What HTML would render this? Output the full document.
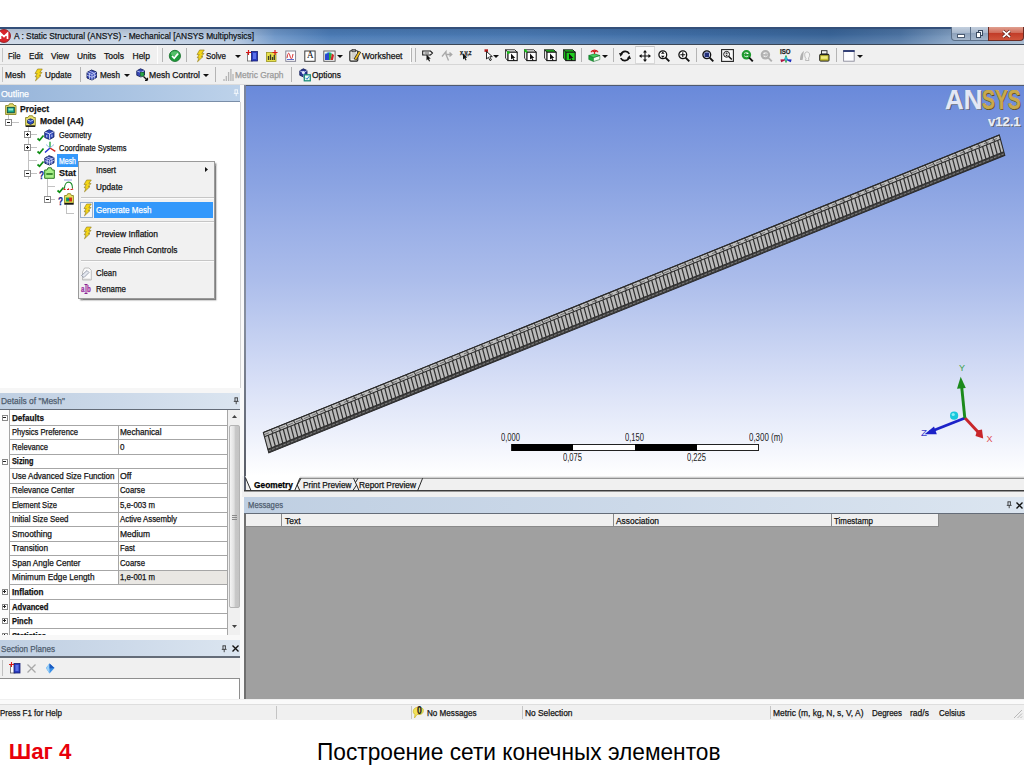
<!DOCTYPE html>
<html lang="ru">
<head>
<meta charset="utf-8">
<title>Шаг 4 - Построение сети конечных элементов</title>
<style>
html,body{margin:0;padding:0;}
body{width:1024px;height:767px;position:relative;overflow:hidden;background:#fff;
 font-family:"Liberation Sans",sans-serif;font-size:9px;color:#111;}
.a{position:absolute;}
.t{position:absolute;white-space:nowrap;transform-origin:0 50%;-webkit-text-stroke:0.25px currentColor;}
svg{position:absolute;overflow:visible;}
</style>
</head>
<body>
<div class="a" style="left:0px;top:27px;width:1024px;height:17px;background:linear-gradient(90deg,#c9d5e4 0px,#c3d1e3 150px,#b1c5de 235px,#6f97c8 275px,#4c7cb6 330px,#4a79b2 520px,#3f6da4 700px,#3a6598 830px,#4d74a3 900px,#7e9cbf 950px,#9fb4cc 1024px);"></div>
<div class="a" style="left:0px;top:27px;width:1024px;height:17px;background:linear-gradient(180deg,rgba(10,30,60,0.16) 0%,rgba(10,30,60,0.04) 45%,rgba(255,255,255,0.02) 55%,rgba(255,255,255,0.14) 100%);"></div>
<div class="a" style="left:0px;top:27px;width:1024px;height:1.5px;background:#34507a;"></div>
<div class="a" style="left:0px;top:44px;width:1024px;height:1px;background:#3a4656;"></div>
<svg style="left:0;top:28px" width="12" height="16" viewBox="0 0 12 16"><circle cx="4" cy="8" r="6.5" fill="#d8242a"/><circle cx="4" cy="8" r="6.5" fill="none" stroke="#8a1418" stroke-width="0.8"/><path d="M0.5 11V5.2L4 8.6L7.5 5.2V11" fill="none" stroke="#fff" stroke-width="1.7"/></svg>
<span class="t" style="left:13.5px;top:29.5px;font-size:9px;line-height:13px;color:#101418;transform:scaleX(0.928);">A : Static Structural (ANSYS) - Mechanical [ANSYS Multiphysics]</span>
<div class="a" style="left:950.500px;top:27px;width:20.500px;height:14px;border:1px solid #5b6f88;border-top:none;border-radius:0 0 0 4px;background:linear-gradient(180deg,#c3cfde 0%,#a9b9cd 45%,#8fa3bc 50%,#a4b6cb 100%);box-sizing:border-box"></div>
<div class="a" style="left:970px;top:27px;width:19px;height:14px;border:1px solid #5b6f88;border-top:none;background:linear-gradient(180deg,#c3cfde 0%,#a9b9cd 45%,#8fa3bc 50%,#a4b6cb 100%);box-sizing:border-box"></div>
<div class="a" style="left:988px;top:27px;width:36px;height:14px;border:1px solid #6b2a22;border-top:none;border-radius:0 0 4px 0;background:linear-gradient(180deg,#e0a090 0%,#d06a58 45%,#c23c28 50%,#d0553c 100%);box-sizing:border-box"></div>
<div class="a" style="left:957px;top:34px;width:8px;height:3.500px;background:#fff;border:1px solid #4a5a70;box-sizing:border-box"></div>
<div class="a" style="left:978px;top:30px;width:5px;height:6px;border:1px solid #3a4a60;background:#e8eef5;box-sizing:border-box"></div>
<div class="a" style="left:976px;top:32px;width:5px;height:6px;border:1px solid #3a4a60;background:#fff;box-sizing:border-box"></div>
<svg style="left:1002px;top:30px" width="9" height="8" viewBox="0 0 9 8"><path d="M1 0.800L8 7.200M8 0.800L1 7.200" stroke="#5a1a14" stroke-width="3"/><path d="M1 0.800L8 7.200M8 0.800L1 7.200" stroke="#fff" stroke-width="1.800"/></svg>
<div class="a" style="left:0px;top:45px;width:1024px;height:40px;background:#f0f0f0;"></div>
<div class="a" style="left:0px;top:64px;width:1024px;height:1px;background:#d6d6d6;"></div>
<div class="a" style="left:0px;top:84px;width:1024px;height:1px;background:#dcdcdc;"></div>
<span class="t" style="left:8px;top:49.5px;font-size:8.5px;line-height:12px;color:#141414;transform:scaleX(0.912);">File</span>
<span class="t" style="left:29px;top:49.5px;font-size:8.5px;line-height:12px;color:#141414;transform:scaleX(0.955);">Edit</span>
<span class="t" style="left:51px;top:49.5px;font-size:8.5px;line-height:12px;color:#141414;transform:scaleX(0.985);">View</span>
<span class="t" style="left:77px;top:49.5px;font-size:8.5px;line-height:12px;color:#141414;transform:scaleX(0.981);">Units</span>
<span class="t" style="left:104px;top:49.5px;font-size:8.5px;line-height:12px;color:#141414;transform:scaleX(1.008);">Tools</span>
<span class="t" style="left:132.5px;top:49.5px;font-size:8.5px;line-height:12px;color:#141414;">Help</span>
<span class="t" style="left:206px;top:49.5px;font-size:8.5px;line-height:12px;color:#141414;transform:scaleX(0.940);">Solve</span>
<span class="t" style="left:362px;top:49.5px;font-size:8.5px;line-height:12px;color:#141414;">Worksheet</span>
<span class="t" style="left:4.5px;top:68.5px;font-size:8.5px;line-height:12px;color:#141414;transform:scaleX(0.986);">Mesh</span>
<span class="t" style="left:44.5px;top:68.5px;font-size:8.5px;line-height:12px;color:#141414;transform:scaleX(0.966);">Update</span>
<span class="t" style="left:99.5px;top:68.5px;font-size:8.5px;line-height:12px;color:#141414;transform:scaleX(0.962);">Mesh</span>
<span class="t" style="left:149px;top:68.5px;font-size:8.5px;line-height:12px;color:#141414;transform:scaleX(1.009);">Mesh Control</span>
<span class="t" style="left:234.5px;top:68.5px;font-size:8.5px;line-height:12px;color:#9a9a9a;transform:scaleX(0.987);">Metric Graph</span>
<span class="t" style="left:312px;top:68.5px;font-size:8.5px;line-height:12px;color:#141414;transform:scaleX(0.990);">Options</span>
<div class="a" style="left:157px;top:48px;width:1px;height:14px;background:#b4b4b4;"></div>
<div class="a" style="left:161.5px;top:48px;width:1px;height:14px;background:#b4b4b4;"></div>
<div class="a" style="left:186px;top:48px;width:1px;height:14px;background:#b4b4b4;"></div>
<div class="a" style="left:410.5px;top:48px;width:1px;height:14px;background:#b4b4b4;"></div>
<div class="a" style="left:414.5px;top:48px;width:1px;height:14px;background:#b4b4b4;"></div>
<div class="a" style="left:581px;top:48px;width:1px;height:14px;background:#b4b4b4;"></div>
<div class="a" style="left:613px;top:48px;width:1px;height:14px;background:#b4b4b4;"></div>
<div class="a" style="left:696px;top:48px;width:1px;height:14px;background:#b4b4b4;"></div>
<div class="a" style="left:836px;top:48px;width:1px;height:14px;background:#b4b4b4;"></div>
<div class="a" style="left:1.5px;top:48px;width:1px;height:14px;background:#c4c4c4;"></div>
<div class="a" style="left:79.5px;top:67px;width:1px;height:15px;background:#b4b4b4;"></div>
<div class="a" style="left:214.5px;top:67px;width:1px;height:15px;background:#b4b4b4;"></div>
<div class="a" style="left:291px;top:67px;width:1px;height:15px;background:#b4b4b4;"></div>
<div class="a" style="left:1.5px;top:67px;width:1px;height:15px;background:#c4c4c4;"></div>
<svg style="left:234.5px;top:54.5px" width="6" height="3" viewBox="0 0 6 3"><path d="M0 0H6L3 3Z" fill="#111"/></svg>
<svg style="left:337px;top:54.5px" width="6" height="3" viewBox="0 0 6 3"><path d="M0 0H6L3 3Z" fill="#111"/></svg>
<svg style="left:493px;top:54.5px" width="6" height="3" viewBox="0 0 6 3"><path d="M0 0H6L3 3Z" fill="#111"/></svg>
<svg style="left:602px;top:54.5px" width="6" height="3" viewBox="0 0 6 3"><path d="M0 0H6L3 3Z" fill="#111"/></svg>
<svg style="left:856.6px;top:54.5px" width="6" height="3" viewBox="0 0 6 3"><path d="M0 0H6L3 3Z" fill="#111"/></svg>
<svg style="left:124px;top:73.5px" width="6" height="3" viewBox="0 0 6 3"><path d="M0 0H6L3 3Z" fill="#111"/></svg>
<svg style="left:203px;top:73.5px" width="6" height="3" viewBox="0 0 6 3"><path d="M0 0H6L3 3Z" fill="#111"/></svg>
<div class="a" style="left:157px;top:46px;width:1px;height:18px;background:#fdfdfd;"></div>
<div class="a" style="left:410px;top:46px;width:1px;height:18px;background:#fdfdfd;"></div>
<svg style="left:168.5px;top:50px" width="12" height="12" viewBox="0 0 12 12"><circle cx="5.900" cy="5.900" r="5.600" fill="#1e9a3a"/><circle cx="5.900" cy="5.900" r="5.600" fill="none" stroke="#0d6a22" stroke-width="0.8"/><ellipse cx="5.900" cy="3.600" rx="4" ry="2.300" fill="#6ccf7e" opacity="0.7"/><path d="M3 6L5.200 8.200L9 3.600" stroke="#fff" stroke-width="1.700" fill="none"/></svg>
<svg style="left:195.5px;top:49.5px" width="9" height="12" viewBox="0 0 9 12"><path d="M3.600 0L8.300 0L5.800 3.400L8 3.400L5.300 6.600L7 6.600L1.500 11.800L3 7.800L1.200 7.800L3.200 4.600L1 4.600Z" fill="#f4d618" stroke="#8a7410" stroke-width="0.600"/></svg>
<svg style="left:246px;top:49.5px" width="12" height="12" viewBox="0 0 12 12"><rect x="1.500" y="2.500" width="5" height="8.500" fill="#fff" stroke="#666" stroke-width="0.8"/><rect x="5.500" y="1.500" width="6" height="9.500" fill="#2a3cc0" stroke="#141c70" stroke-width="0.8"/><rect x="7" y="3" width="3" height="6" fill="#5a70e8"/><path d="M2.500 0V5M0 2.500H5" stroke="#d81818" stroke-width="1.200"/></svg>
<svg style="left:266px;top:49.5px" width="12" height="12" viewBox="0 0 12 12"><rect x="0.500" y="2.500" width="9.500" height="9" fill="#e8e04a" stroke="#9a9420" stroke-width="0.8"/><path d="M2.500 10V6M4.500 10V4.500M6.500 10V7M8.300 10V5" stroke="#3a3a2a" stroke-width="1.300"/><path d="M9 0V5M6.500 2.500H11.500" stroke="#d81818" stroke-width="1.200"/></svg>
<svg style="left:285px;top:49.5px" width="12" height="12" viewBox="0 0 12 12"><rect x="0.800" y="1" width="9.800" height="10.300" fill="#fdfdff" stroke="#7a7a8a" stroke-width="0.9"/><path d="M2 8C3 2 4 2 5 6S7 10 8 4" stroke="#d83030" stroke-width="1" fill="none"/><path d="M2 9.500H9" stroke="#4a5ac8" stroke-width="0.9"/></svg>
<svg style="left:304px;top:49.5px" width="12" height="12" viewBox="0 0 12 12"><rect x="0.800" y="1" width="10.300" height="10.300" fill="#fff" stroke="#3a3a3a" stroke-width="1"/></svg>
<span class="t" style="left:306.5px;top:49.3px;font-size:9.5px;line-height:13px;color:#111;transform:scaleX(0.945);font-family:'Liberation Serif',serif;-webkit-text-stroke:0;">A</span>
<svg style="left:323px;top:49.5px" width="13" height="12" viewBox="0 0 13 12"><rect x="0.800" y="1" width="11.300" height="10.300" fill="#f4f4f4" stroke="#555" stroke-width="0.9"/><path d="M2 4L6 2L6 10L2 10Z" fill="#2a48d0"/><path d="M6 2L9 3.500L7.500 10L6 10Z" fill="#28b040"/><path d="M9 3.500L11 5L10 10L7.500 10Z" fill="#d02828"/><path d="M2 4L6 2L9 3.500" stroke="#6ad0e8" stroke-width="0.8" fill="none"/></svg>
<svg style="left:349px;top:49px" width="12" height="13" viewBox="0 0 12 13"><rect x="0.800" y="1.800" width="8" height="10.300" rx="1" fill="#f2f2ea" stroke="#222" stroke-width="1.100"/><rect x="3" y="0.500" width="3.600" height="2.400" fill="#888" stroke="#222" stroke-width="0.600"/><path d="M2.500 5H7M2.500 7H7M2.500 9H6" stroke="#999" stroke-width="0.700"/><path d="M10.800 2.500L6 10.800" stroke="#222" stroke-width="3"/><path d="M10.600 2.800L6.300 10.300" stroke="#f0c020" stroke-width="1.700"/></svg>
<svg style="left:422px;top:49.5px" width="12" height="12" viewBox="0 0 12 12"><path d="M0.700 1H8.500L10.500 3L8.500 5H0.700Z" fill="#f4f4f4" stroke="#1a1a1a" stroke-width="1.100"/><path d="M2.500 3H7" stroke="#444" stroke-width="0.900"/><path d="M4.5 4.5l0 6l1.400 -1.300l1.200 2.400l1 -0.500l-1.200 -2.300l1.900 0Z" fill="#111"/></svg>
<svg style="left:441px;top:49.5px" width="12" height="12" viewBox="0 0 12 12"><path d="M1 6.500L5 1.500V4.500H10.500M8.500 2.500L10.800 4.600L8.500 6.500M5 4.500L7.500 10.500" stroke="#a8a8a8" stroke-width="1.300" fill="none"/></svg>
<span class="t" style="left:459.5px;top:47.5px;font-size:6.5px;line-height:9px;color:#222;font-weight:bold;transform:scaleX(0.845);">x,y,z</span>
<svg style="left:462px;top:53px" width="8" height="9" viewBox="0 0 8 9"><path d="M1 0.5l0 6l1.400 -1.300l1.200 2.400l1 -0.500l-1.200 -2.300l1.900 0Z" fill="#111"/></svg>
<svg style="left:483.5px;top:49px" width="11" height="13" viewBox="0 0 11 13"><rect x="0.500" y="0.300" width="3.500" height="2.600" fill="#b01818"/><path d="M2.500 2.500V10L4.400 8.300L6 11.600L7.400 10.900L5.800 7.700L8.300 7.600Z" fill="#fff" stroke="#111" stroke-width="0.900"/></svg>
<svg style="left:504.8px;top:49.3px" width="13" height="12.5" viewBox="0 0 13 12.5"><path d="M0.600 0.800L3 3.200V11.600L0.600 9.300Z" fill="#fff" stroke="#1a1a1a" stroke-width="0.900"/><path d="M0.600 0.800H9.800L12.200 3.200H3Z" fill="#fff" stroke="#1a1a1a" stroke-width="0.900"/><rect x="3" y="3.200" width="9.200" height="8.400" fill="#fff" stroke="#1a1a1a" stroke-width="1.100"/><rect x="2" y="2.200" width="2.600" height="2.600" fill="#18c018"/><path d="M6 4.6l0 6l1.400 -1.300l1.200 2.400l1 -0.500l-1.200 -2.300l1.900 0Z" fill="#111"/></svg>
<svg style="left:524px;top:49.3px" width="13" height="12.5" viewBox="0 0 13 12.5"><path d="M0.600 0.800L3 3.200V11.600L0.600 9.300Z" fill="#fff" stroke="#1a1a1a" stroke-width="0.900"/><path d="M0.600 0.800H9.800L12.200 3.200H3Z" fill="#fff" stroke="#1a1a1a" stroke-width="0.900"/><rect x="3" y="3.200" width="9.200" height="8.400" fill="#fff" stroke="#1a1a1a" stroke-width="1.100"/><path d="M0.600 0.800L3 3.200" stroke="#18c018" stroke-width="2"/><path d="M6 4.6l0 6l1.400 -1.300l1.200 2.400l1 -0.500l-1.200 -2.300l1.900 0Z" fill="#111"/></svg>
<svg style="left:543.5px;top:49.3px" width="13" height="12.5" viewBox="0 0 13 12.5"><path d="M0.600 0.800L3 3.200V11.600L0.600 9.300Z" fill="#fff" stroke="#1a1a1a" stroke-width="0.900"/><path d="M0.600 0.800H9.800L12.200 3.200H3Z" fill="#1fd01f" stroke="#1a1a1a" stroke-width="0.900"/><rect x="3" y="3.200" width="9.200" height="8.400" fill="#fff" stroke="#1a1a1a" stroke-width="1.100"/><path d="M6 4.6l0 6l1.400 -1.300l1.200 2.400l1 -0.500l-1.200 -2.300l1.900 0Z" fill="#111"/></svg>
<svg style="left:562.5px;top:49.3px" width="13" height="12.5" viewBox="0 0 13 12.5"><path d="M0.600 0.800L3 3.200V11.600L0.600 9.300Z" fill="#1fd01f" stroke="#1a1a1a" stroke-width="0.900"/><path d="M0.600 0.800H9.800L12.200 3.200H3Z" fill="#1fd01f" stroke="#1a1a1a" stroke-width="0.900"/><rect x="3" y="3.200" width="9.200" height="8.400" fill="#1fd01f" stroke="#1a1a1a" stroke-width="1.100"/><path d="M6 4.6l0 6l1.400 -1.300l1.200 2.400l1 -0.500l-1.200 -2.300l1.900 0Z" fill="#111"/></svg>
<svg style="left:587.5px;top:49px" width="13" height="13" viewBox="0 0 13 13"><path d="M0.800 6.500L5.500 8.500V12.500L0.800 10.500Z" fill="#18a838" stroke="#0c6a20" stroke-width="0.600"/><path d="M5.500 8.500L11.800 6.500V10.500L5.500 12.500Z" fill="#f4fff4" stroke="#3a8a4a" stroke-width="0.700"/><path d="M0.800 6.500L6.500 4.800L11.800 6.500L5.500 8.500Z" fill="#48d060" stroke="#0c6a20" stroke-width="0.600"/><path d="M3 3.200C4 0.300 9 0.300 10 3.200" stroke="#d02020" stroke-width="1.200" fill="none"/><path d="M4.500 2.500H8.500" stroke="#d02020" stroke-width="1.400"/><path d="M6.500 2.500V5" stroke="#d02020" stroke-width="1"/></svg>
<svg style="left:619px;top:49.5px" width="12" height="12" viewBox="0 0 12 12"><path d="M10.300 3.800A4.600 4.600 0 0 0 2 4.300" stroke="#111" stroke-width="1.700" fill="none"/><path d="M1.700 8.200A4.600 4.600 0 0 0 10 7.700" stroke="#111" stroke-width="1.700" fill="none"/><path d="M0 3L4.200 3.500L1.500 6.800Z" fill="#111"/><path d="M12 9L7.800 8.500L10.500 5.200Z" fill="#111"/></svg>
<div class="a" style="left:634.500px;top:46px;width:20px;height:18px;background:#f8f8f8;border:1px solid #d8d8d8;border-top-color:#c4c4c4;box-sizing:border-box"></div>
<svg style="left:639px;top:49.5px" width="12" height="12" viewBox="0 0 12 12"><path d="M6 1V11M1 6H11" stroke="#111" stroke-width="1.100"/><path d="M6 0L8 2.600H4ZM6 12L8 9.400H4ZM0 6L2.600 4V8ZM12 6L9.400 4V8Z" fill="#111"/></svg>
<svg style="left:658px;top:49.5px" width="12" height="12" viewBox="0 0 12 12"><circle cx="4.8" cy="4.800" r="3.900" fill="#fff" stroke="#111" stroke-width="1.300"/><path d="M7.600 7.600L11.300 11.300" stroke="#111" stroke-width="1.900"/><path d="M4.800 1.600L6.600 3.800H3ZM4.800 8L6.600 5.800H3Z" fill="#111"/></svg>
<svg style="left:677.5px;top:49.5px" width="12" height="12" viewBox="0 0 12 12"><circle cx="4.8" cy="4.800" r="3.900" fill="#fff" stroke="#111" stroke-width="1.300"/><path d="M7.600 7.600L11.300 11.300" stroke="#111" stroke-width="1.900"/><path d="M4.800 2.300V7.300M2.300 4.800H7.300" stroke="#111" stroke-width="1.100"/></svg>
<svg style="left:702px;top:49.5px" width="12" height="12" viewBox="0 0 12 12"><circle cx="4.8" cy="4.800" r="3.900" fill="#c8d0f0" stroke="#111" stroke-width="1.300"/><path d="M7.600 7.600L11.300 11.300" stroke="#111" stroke-width="1.900"/><rect x="2.600" y="2.600" width="4.400" height="4.400" fill="#22307a"/></svg>
<svg style="left:721px;top:49.3px" width="13" height="13" viewBox="0 0 13 13"><rect x="0.600" y="0.600" width="11.800" height="11.800" fill="#fafafa" stroke="#222" stroke-width="1.100"/><circle cx="5.600" cy="5.300" r="2.900" fill="#fff" stroke="#111" stroke-width="1"/><path d="M7.800 7.500L10.800 10.600" stroke="#111" stroke-width="1.500"/><path d="M5.600 3.200L6.900 4.800H4.300ZM5.600 7.400L6.900 5.800H4.300Z" fill="#111"/></svg>
<svg style="left:740.5px;top:49.5px" width="13" height="12" viewBox="0 0 13 12"><circle cx="5.400" cy="4.800" r="3.600" fill="#fff" stroke="#1e9a2e" stroke-width="2.300"/><path d="M8.200 7.600L11.800 11.300" stroke="#111" stroke-width="1.900"/><path d="M2.600 4.800L5.400 2.600V3.900H8V5.700H5.400V7Z" fill="#1e9a2e"/></svg>
<svg style="left:760px;top:49.5px" width="13" height="12" viewBox="0 0 13 12"><circle cx="5.400" cy="4.800" r="3.600" fill="#f4f4f4" stroke="#b0b0b0" stroke-width="2.300"/><path d="M8.200 7.600L11.800 11.300" stroke="#b0b0b0" stroke-width="1.900"/><path d="M8.200 4.800L5.400 2.600V3.900H3V5.700H5.400V7Z" fill="#b8b8b8"/></svg>
<span class="t" style="left:780px;top:47.0px;font-size:6.5px;line-height:9px;color:#222;font-weight:bold;transform:scaleX(0.937);">ISO</span>
<svg style="left:779.5px;top:54.5px" width="12" height="8" viewBox="0 0 12 8"><path d="M6 0.500V7.500" stroke="#18a040" stroke-width="1.500"/><path d="M6 4L1 6.500" stroke="#b01840" stroke-width="1.500"/><path d="M6 4L11 6.500" stroke="#2030c0" stroke-width="1.500"/><circle cx="6" cy="3.800" r="1.700" fill="#30b8d0"/><path d="M0.300 4.500L3 4.200L1.500 7.300Z" fill="#b01840"/><path d="M11.700 4.500L9 4.200L10.500 7.300Z" fill="#2030c0"/></svg>
<svg style="left:799px;top:49.5px" width="12" height="12" viewBox="0 0 12 12"><path d="M1 10C1 5 3 2 5 1C4 4 4.500 7 3.500 10Z" fill="#b0b0b0"/><path d="M6 3C7 1.500 10 1.500 10.500 4C11 6 10 7 9.500 8L10 10.500H6.500L7 8.500C5.500 7 5.500 4.500 6 3Z" fill="#f4f4f4" stroke="#b4b4b4" stroke-width="0.900"/></svg>
<svg style="left:818.5px;top:49.5px" width="11" height="12" viewBox="0 0 11 12"><rect x="2.500" y="0.700" width="5.500" height="3.300" fill="#f4f4f4" stroke="#222" stroke-width="0.900"/><rect x="0.700" y="4.300" width="9.300" height="6.800" rx="0.800" fill="#c8c030" stroke="#222" stroke-width="1"/><rect x="2" y="6.200" width="6.600" height="2.600" fill="#f0ec80"/><path d="M1 4.600H9.800" stroke="#222" stroke-width="1.200"/></svg>
<svg style="left:842.5px;top:49.5px" width="12" height="12" viewBox="0 0 12 12"><rect x="0.600" y="0.600" width="10.600" height="10.600" fill="#fdfdff" stroke="#8a8a9a" stroke-width="0.900"/><rect x="0.200" y="0.200" width="11.400" height="1.700" fill="#1c2c6a"/></svg>
<svg style="left:33.5px;top:68.5px" width="9" height="12" viewBox="0 0 9 12"><path d="M3.600 0L8.300 0L5.800 3.400L8 3.400L5.300 6.600L7 6.600L1.500 11.800L3 7.800L1.200 7.800L3.200 4.600L1 4.600Z" fill="#f4d618" stroke="#8a7410" stroke-width="0.600"/></svg>
<svg style="left:86px;top:68.5px" width="12" height="12" viewBox="0 0 12 12"><path d="M1 3.500L5.500 1L10.500 3V8.500L6 11L1 9Z" fill="#3a4ab8" stroke="#14205a" stroke-width="0.900"/><path d="M1 3.500L6 5.500L10.500 3M6 5.500V11M3.400 2.200L8.300 4.300V9.800M3.500 4.500V10M1 6.200L6 8.300L10.500 5.800" stroke="#dfe6ff" stroke-width="0.700" fill="none"/></svg>
<svg style="left:136px;top:68px" width="12" height="13" viewBox="0 0 12 13"><path d="M0.800 2.800L4.500 0.800L8.500 2.500V7L5 9L0.800 7.300Z" fill="#3a4ab8" stroke="#14205a" stroke-width="0.900"/><path d="M0.800 2.800L5 4.500L8.500 2.500M5 4.500V9" stroke="#dfe6ff" stroke-width="0.700" fill="none"/><rect x="4.500" y="4.500" width="3.500" height="3.600" fill="#28a848" stroke="#0c5a20" stroke-width="0.600"/><path d="M7.500 8.500L11.500 12.300M11.500 12.300V9.800M11.500 12.300H9" stroke="#111" stroke-width="1.200" fill="none"/></svg>
<svg style="left:222.5px;top:68px" width="11" height="14" viewBox="0 0 11 14"><path d="M1 13V11M3.300 13V8M5.600 13V4M7.900 13V1M10 13V6" stroke="#b4b4b4" stroke-width="1.300"/></svg>
<svg style="left:299px;top:68px" width="12" height="14" viewBox="0 0 12 14"><path d="M0.800 2.800L4.300 0.800L8 2.500V7L4.800 9L0.800 7.300Z" fill="#2a3898" stroke="#14205a" stroke-width="0.900"/><path d="M0.800 2.800L4.800 4.500L8 2.500M4.800 4.500V9" stroke="#dfe6ff" stroke-width="0.700" fill="none"/><circle cx="4.300" cy="4.600" r="1.500" fill="#e8ecff"/><rect x="5.300" y="6.800" width="6" height="6" fill="#e8fff0" stroke="#1a8a7a" stroke-width="1.300"/><path d="M6.500 9.800L8 11.300L10.300 8.200" stroke="#2a7ad0" stroke-width="1" fill="none"/></svg>
<div class="a" style="left:0px;top:85px;width:240px;height:618px;background:#f0f0f0;"></div>
<div class="a" style="left:240px;top:85px;width:4px;height:618px;background:#fafafa;"></div>
<div class="a" style="left:0px;top:85px;width:240px;height:16px;background:linear-gradient(90deg,#97b5da 0%,#a9c3e2 50%,#bdd2ea 100%);"></div>
<div class="a" style="left:0px;top:101px;width:240px;height:1px;background:#7a8ea8;"></div>
<span class="t" style="left:1px;top:86.5px;font-size:9.5px;line-height:13px;color:#fff;transform:scaleX(0.930);">Outline</span>
<svg style="left:232.500px;top:89.300px" width="6.400" height="8" viewBox="0 0 8 10"><path d="M2 1H6M2.5 1V5M5.5 1V5M1 5.5H7M4 5.5V9" stroke="#fff" stroke-width="1" fill="none"/></svg>
<div class="a" style="left:0px;top:102px;width:240px;height:286px;background:#fff;"></div>
<div class="a" style="left:0px;top:388px;width:240px;height:5px;background:#f6f6f6;"></div>
<div class="a" style="left:240px;top:102px;width:1px;height:286px;background:#d4d4d4;"></div>
<div class="a" style="left:11px;top:121.5px;width:8px;height:1px;background:#c2c2c2;"></div>
<div class="a" style="left:8px;top:115px;width:1px;height:4px;background:#c2c2c2;"></div>
<div class="a" style="left:27.5px;top:127px;width:1px;height:52px;background:#c2c2c2;"></div>
<div class="a" style="left:31px;top:134px;width:6px;height:1px;background:#c2c2c2;"></div>
<div class="a" style="left:31px;top:147px;width:6px;height:1px;background:#c2c2c2;"></div>
<div class="a" style="left:28px;top:160px;width:9px;height:1px;background:#c2c2c2;"></div>
<div class="a" style="left:31px;top:173px;width:6px;height:1px;background:#c2c2c2;"></div>
<div class="a" style="left:47px;top:179px;width:1px;height:21px;background:#c2c2c2;"></div>
<div class="a" style="left:47px;top:186px;width:8px;height:1px;background:#c2c2c2;"></div>
<div class="a" style="left:51px;top:199px;width:4px;height:1px;background:#c2c2c2;"></div>
<div class="a" style="left:66px;top:205px;width:1px;height:9px;background:#c2c2c2;"></div>
<div class="a" style="left:66px;top:213px;width:8px;height:1px;background:#c2c2c2;"></div>
<div class="a" style="left:4.800000000000001px;top:118.5px;width:7px;height:7px;border:1px solid #8c8c8c;background:#fff;box-sizing:border-box"></div>
<div class="a" style="left:6.800000000000001px;top:121.5px;width:3px;height:1px;background:#111"></div>
<div class="a" style="left:24.0px;top:131.0px;width:7px;height:7px;border:1px solid #8c8c8c;background:#fff;box-sizing:border-box"></div>
<div class="a" style="left:26.0px;top:134.0px;width:3px;height:1px;background:#111"></div>
<div class="a" style="left:27.0px;top:133.0px;width:1px;height:3px;background:#111"></div>
<div class="a" style="left:24.0px;top:144.0px;width:7px;height:7px;border:1px solid #8c8c8c;background:#fff;box-sizing:border-box"></div>
<div class="a" style="left:26.0px;top:147.0px;width:3px;height:1px;background:#111"></div>
<div class="a" style="left:27.0px;top:146.0px;width:1px;height:3px;background:#111"></div>
<div class="a" style="left:24.0px;top:170.0px;width:7px;height:7px;border:1px solid #8c8c8c;background:#fff;box-sizing:border-box"></div>
<div class="a" style="left:26.0px;top:173.0px;width:3px;height:1px;background:#111"></div>
<div class="a" style="left:44.0px;top:196.0px;width:7px;height:7px;border:1px solid #8c8c8c;background:#fff;box-sizing:border-box"></div>
<div class="a" style="left:46.0px;top:199.0px;width:3px;height:1px;background:#111"></div>
<span class="t" style="left:20px;top:103.0px;font-size:9px;line-height:13px;color:#141414;font-weight:bold;transform:scaleX(0.950);">Project</span>
<span class="t" style="left:39.5px;top:115.0px;font-size:9px;line-height:13px;color:#141414;font-weight:bold;transform:scaleX(0.946);">Model (A4)</span>
<span class="t" style="left:58.5px;top:128.5px;font-size:8.5px;line-height:12px;color:#141414;transform:scaleX(0.871);">Geometry</span>
<span class="t" style="left:58.5px;top:141.5px;font-size:8.5px;line-height:12px;color:#141414;transform:scaleX(0.882);">Coordinate Systems</span>
<div class="a" style="left:57px;top:154px;width:21px;height:13px;background:#3398fb;"></div>
<span class="t" style="left:59px;top:154.5px;font-size:8.5px;line-height:12px;color:#fff;transform:scaleX(0.817);">Mesh</span>
<span class="t" style="left:59px;top:167.0px;font-size:9px;line-height:13px;color:#141414;font-weight:bold;">Stat</span>
<svg style="left:37px;top:134.8px" width="7" height="6" viewBox="0 0 7 6"><path d="M0.5 3.5L2.500 5.200L6.5 0.5" stroke="#0f8f14" stroke-width="1.700" fill="none"/></svg>
<svg style="left:37px;top:147.8px" width="7" height="6" viewBox="0 0 7 6"><path d="M0.5 3.5L2.500 5.200L6.5 0.5" stroke="#0f8f14" stroke-width="1.700" fill="none"/></svg>
<svg style="left:37px;top:160.5px" width="7" height="6" viewBox="0 0 7 6"><path d="M0.5 3.5L2.500 5.200L6.5 0.5" stroke="#0f8f14" stroke-width="1.700" fill="none"/></svg>
<svg style="left:56.5px;top:186.5px" width="7" height="6" viewBox="0 0 7 6"><path d="M0.5 3.5L2.500 5.200L6.5 0.5" stroke="#0f8f14" stroke-width="1.700" fill="none"/></svg>
<span class="t" style="left:38.5px;top:168.0px;font-size:10.5px;line-height:15px;color:#16268a;font-weight:bold;transform:scaleX(0.779);">?</span>
<span class="t" style="left:57.8px;top:194.3px;font-size:10.5px;line-height:15px;color:#16268a;font-weight:bold;transform:scaleX(0.779);">?</span>
<svg style="left:5px;top:102.5px" width="12" height="12.5" viewBox="0 0 12 12.5"><path d="M0.600 2.500H3.500L4.500 0.800H8L9 2.500H11V11.500H0.600Z" fill="#e8e070" stroke="#8a8420" stroke-width="0.900"/><rect x="2.300" y="4.300" width="7" height="5.500" fill="#1aa88a" stroke="#0c4a40" stroke-width="0.900"/><rect x="3.500" y="5.500" width="4.600" height="2" fill="#8ae8d0"/></svg>
<svg style="left:25px;top:115.3px" width="11" height="12.5" viewBox="0 0 11 12.5"><path d="M0.600 2.500H3L4 0.800H7.500L8.500 2.500H10.300V10.500H0.600Z" fill="#e8e070" stroke="#8a8420" stroke-width="0.900"/><path d="M2.500 5L5.500 3.800L8.500 5V8L5.500 9.500L2.500 8Z" fill="#2a48b8" stroke="#10205a" stroke-width="0.700"/><path d="M2.500 5L5.500 6.300L8.500 5" stroke="#cfe0ff" stroke-width="0.800" fill="none"/><path d="M0.600 10.500H10.300V12H0.600Z" fill="#222"/></svg>
<svg style="left:43.5px;top:128.8px" width="11.5" height="12" viewBox="0 0 11.5 12"><g transform="scale(0.93)"><path d="M0.800 3.200L5.500 0.800L10.700 2.800V8.700L6 11.300L0.800 9.200Z" fill="#2f46b8" stroke="#10205a" stroke-width="0.900"/><path d="M0.800 3.200L6 5.300L10.700 2.800M6 5.300V11.300" stroke="#e8eeff" stroke-width="0.900" fill="none"/><path d="M3 6.500V9M8.500 6V8.500" stroke="#e8eeff" stroke-width="0.900"/></g></svg>
<svg style="left:43.5px;top:141px" width="12" height="13" viewBox="0 0 12 13"><path d="M6 7L6 0.800" stroke="#18a038" stroke-width="1.300"/><path d="M6 7L1 11.500" stroke="#2030d0" stroke-width="1.400"/><path d="M6 7L11.300 10.300" stroke="#d02020" stroke-width="1.400"/><path d="M6 7L2 3.500M6 7L10 3.500" stroke="#8ab0e0" stroke-width="0.900"/></svg>
<svg style="left:44px;top:154.5px" width="11" height="10.5" viewBox="0 0 11 10.5"><path d="M0.800 3L5 0.700L10 2.600V7.800L5.600 10L0.800 8.200Z" fill="#3848b0" stroke="#10205a" stroke-width="0.900"/><path d="M0.800 3L5.600 4.900L10 2.600M5.600 4.900V10M3 1.800L7.800 3.800V9M3.200 4V9.100M0.800 5.600L5.600 7.500L10 5.200" stroke="#e4eaff" stroke-width="0.700" fill="none"/></svg>
<svg style="left:44px;top:166.5px" width="11" height="12" viewBox="0 0 11 12"><path d="M0.700 3H3L4 0.800H7.300L8.300 3H10.300V11.300H0.700Z" fill="#a8f088" stroke="#2a7a20" stroke-width="1"/><path d="M2.300 7H8.700" stroke="#1a6a18" stroke-width="1.500"/></svg>
<svg style="left:63px;top:179px" width="11" height="13" viewBox="0 0 11 13"><path d="M1.500 1H9.500" stroke="#2a3ac0" stroke-width="1" stroke-dasharray="1 1"/><path d="M1.500 9.500C1.500 1 9.500 1 9.500 9.500" stroke="#1a8a2a" stroke-width="1.100" fill="none"/><path d="M0.500 10.500H10.500" stroke="#d02020" stroke-width="1" stroke-dasharray="2 1.500"/><path d="M1.500 9L0.500 10.500H2.500ZM5.500 9L4.500 10.500H6.500ZM9.500 9L8.500 10.500H10.500Z" fill="#d02020"/></svg>
<svg style="left:63.5px;top:192.5px" width="10" height="12" viewBox="0 0 10 12"><path d="M0.600 2.500H2.800L3.700 0.700H6.500L7.400 2.500H9.400V10H0.600Z" fill="#e8e060" stroke="#8a8420" stroke-width="0.900"/><path d="M2 4.500H5V8.500H2Z" fill="#18a848"/><path d="M5 4.500H8V8.500H5Z" fill="#d03018"/><path d="M3.500 5.500L6 6.500L3.500 7.500Z" fill="#2040c0"/><path d="M0.300 10H9.700V11.700H0.300Z" fill="#181818"/></svg>
<div class="a" style="left:77.500px;top:160.500px;width:137.500px;height:138.500px;background:#f1f1f1;border:1px solid #9a9a9a;box-sizing:border-box;box-shadow:1.500px 1.500px 1.500px rgba(0,0,0,0.5)"></div>
<div class="a" style="left:80.5px;top:197px;width:133px;height:1px;background:#c6c6c6;"></div>
<div class="a" style="left:80.5px;top:198px;width:133px;height:1px;background:#fbfbfb;"></div>
<div class="a" style="left:80.5px;top:220.5px;width:133px;height:1px;background:#c6c6c6;"></div>
<div class="a" style="left:80.5px;top:221.5px;width:133px;height:1px;background:#fbfbfb;"></div>
<div class="a" style="left:80.5px;top:260px;width:133px;height:1px;background:#c6c6c6;"></div>
<div class="a" style="left:80.5px;top:261px;width:133px;height:1px;background:#fbfbfb;"></div>
<div class="a" style="left:94px;top:202px;width:119px;height:16px;background:#3398fb;"></div>
<div class="a" style="left:80px;top:202px;width:13px;height:16px;background:#f6f6f6;border:1px solid #9ab0cc;box-sizing:border-box;"></div>
<span class="t" style="left:95.5px;top:164.0px;font-size:8.5px;line-height:12px;color:#141414;transform:scaleX(0.940);">Insert</span>
<span class="t" style="left:95.5px;top:180.5px;font-size:8.5px;line-height:12px;color:#141414;transform:scaleX(0.966);">Update</span>
<span class="t" style="left:95.5px;top:204.0px;font-size:8.5px;line-height:12px;color:#fff;transform:scaleX(0.947);">Generate Mesh</span>
<span class="t" style="left:95.5px;top:227.5px;font-size:8.5px;line-height:12px;color:#141414;transform:scaleX(0.994);">Preview Inflation</span>
<span class="t" style="left:95.5px;top:243.7px;font-size:8.5px;line-height:12px;color:#141414;transform:scaleX(0.980);">Create Pinch Controls</span>
<span class="t" style="left:95.5px;top:266.8px;font-size:8.5px;line-height:12px;color:#141414;transform:scaleX(0.923);">Clean</span>
<span class="t" style="left:95.5px;top:283.0px;font-size:8.5px;line-height:12px;color:#141414;transform:scaleX(0.933);">Rename</span>
<svg style="left:204.5px;top:167px" width="3" height="5" viewBox="0 0 3 5"><path d="M0 0V5L3 2.5Z" fill="#111"/></svg>
<svg style="left:82.5px;top:180.3px" width="9" height="12" viewBox="0 0 9 12"><path d="M3.600 0L8.300 0L5.800 3.400L8 3.400L5.300 6.600L7 6.600L1.500 11.800L3 7.800L1.200 7.800L3.200 4.600L1 4.600Z" fill="#f4d618" stroke="#8a7410" stroke-width="0.600"/></svg>
<svg style="left:82.5px;top:204px" width="9" height="12" viewBox="0 0 9 12"><path d="M3.600 0L8.300 0L5.800 3.400L8 3.400L5.300 6.600L7 6.600L1.500 11.800L3 7.800L1.200 7.800L3.200 4.600L1 4.600Z" fill="#f4d618" stroke="#8a7410" stroke-width="0.600"/></svg>
<svg style="left:82.5px;top:227.3px" width="9" height="12" viewBox="0 0 9 12"><path d="M3.600 0L8.300 0L5.800 3.400L8 3.400L5.300 6.600L7 6.600L1.500 11.800L3 7.800L1.200 7.800L3.200 4.600L1 4.600Z" fill="#f4d618" stroke="#8a7410" stroke-width="0.600"/></svg>
<svg style="left:80.5px;top:266.5px" width="11" height="14" viewBox="0 0 11 14"><path d="M3.500 1H8L10.300 3.300V13H1.500V5Z" fill="#fbfbfb" stroke="#b8b8b8" stroke-width="0.900"/><path d="M0.500 8.500L6 3.500L8 5.500L3 10.500Z" fill="#e4e8f0" stroke="#8a90a0" stroke-width="0.800"/><path d="M2 12.300H9.500" stroke="#c8c8c8" stroke-width="1.200"/></svg>
<span class="t" style="left:80.5px;top:282.5px;font-size:8.5px;line-height:12px;color:#9a2aa0;font-weight:bold;transform:scaleX(0.739);">a</span>
<span class="t" style="left:87px;top:282.5px;font-size:8.5px;line-height:12px;color:#9a2aa0;font-weight:bold;transform:scaleX(0.730);">b</span>
<svg style="left:83.5px;top:283.5px" width="4" height="10" viewBox="0 0 4 10"><path d="M2 0.500V9.500M0.500 0.500H3.500M0.500 9.500H3.500" stroke="#8a2090" stroke-width="1"/></svg>
<div class="a" style="left:0px;top:393px;width:240px;height:16px;background:linear-gradient(90deg,#bfcfe2 0%,#ccd9e9 50%,#dbe5f0 100%);"></div>
<div class="a" style="left:0px;top:409px;width:240px;height:1.5px;background:#646c78;"></div>
<span class="t" style="left:1px;top:394.5px;font-size:9px;line-height:13px;color:#4e5c6e;transform:scaleX(0.935);">Details of &quot;Mesh&quot;</span>
<svg style="left:232.500px;top:397.300px" width="6.400" height="8" viewBox="0 0 8 10"><path d="M2 1H6M2.5 1V5M5.5 1V5M1 5.5H7M4 5.5V9" stroke="#222" stroke-width="1" fill="none"/></svg>
<div class="a" style="left:0px;top:410px;width:228px;height:225px;background:#fff;"></div>
<div class="a" style="left:0px;top:410px;width:9px;height:225px;background:#fdfdfd;"></div>
<div class="a" style="left:0;top:410px;width:240px;height:225px;overflow:hidden">
<div class="a" style="left:9px;top:0px;width:1px;height:225px;background:#a6a6a6;"></div>
<div class="a" style="left:227px;top:0px;width:1px;height:225px;background:#a6a6a6;"></div>
<div class="a" style="left:228px;top:0px;width:12px;height:225px;background:#f0f0f0;"></div>
<div class="a" style="left:9px;top:15px;width:219px;height:1px;background:#a6a6a6;"></div>
<span class="t" style="left:12px;top:1.6px;font-size:8.5px;line-height:12px;color:#111;font-weight:bold;transform:scaleX(0.954);">Defaults</span>
<div class="a" style="left:1.5px;top:4.5px;width:6px;height:6px;border:1px solid #8a8a8a;background:#fff;box-sizing:border-box"></div>
<div class="a" style="left:3px;top:7.0px;width:3px;height:1px;background:#222"></div>
<div class="a" style="left:9px;top:29px;width:219px;height:1px;background:#a6a6a6;"></div>
<div class="a" style="left:117.5px;top:15px;width:1px;height:15px;background:#a6a6a6;"></div>
<span class="t" style="left:12px;top:16.0px;font-size:8.5px;line-height:12px;color:#141414;transform:scaleX(0.901);">Physics Preference</span>
<span class="t" style="left:120px;top:16.0px;font-size:8.5px;line-height:12px;color:#141414;transform:scaleX(0.965);">Mechanical</span>
<div class="a" style="left:9px;top:44px;width:219px;height:1px;background:#a6a6a6;"></div>
<div class="a" style="left:117.5px;top:30px;width:1px;height:15px;background:#a6a6a6;"></div>
<span class="t" style="left:12px;top:30.5px;font-size:8.5px;line-height:12px;color:#141414;transform:scaleX(0.896);">Relevance</span>
<span class="t" style="left:120px;top:30.5px;font-size:8.5px;line-height:12px;color:#141414;transform:scaleX(0.950);">0</span>
<div class="a" style="left:9px;top:58px;width:219px;height:1px;background:#a6a6a6;"></div>
<span class="t" style="left:12px;top:45.2px;font-size:8.5px;line-height:12px;color:#111;font-weight:bold;transform:scaleX(0.859);">Sizing</span>
<div class="a" style="left:1.5px;top:48.5px;width:6px;height:6px;border:1px solid #8a8a8a;background:#fff;box-sizing:border-box"></div>
<div class="a" style="left:3px;top:51.0px;width:3px;height:1px;background:#222"></div>
<div class="a" style="left:9px;top:73px;width:219px;height:1px;background:#a6a6a6;"></div>
<div class="a" style="left:117.5px;top:59px;width:1px;height:15px;background:#a6a6a6;"></div>
<span class="t" style="left:12px;top:59.6px;font-size:8.5px;line-height:12px;color:#141414;transform:scaleX(0.943);">Use Advanced Size Function</span>
<span class="t" style="left:120px;top:59.6px;font-size:8.5px;line-height:12px;color:#141414;transform:scaleX(1.028);">Off</span>
<div class="a" style="left:9px;top:87px;width:219px;height:1px;background:#a6a6a6;"></div>
<div class="a" style="left:117.5px;top:73px;width:1px;height:15px;background:#a6a6a6;"></div>
<span class="t" style="left:12px;top:74.1px;font-size:8.5px;line-height:12px;color:#141414;transform:scaleX(0.918);">Relevance Center</span>
<span class="t" style="left:120px;top:74.1px;font-size:8.5px;line-height:12px;color:#141414;transform:scaleX(0.912);">Coarse</span>
<div class="a" style="left:9px;top:102px;width:219px;height:1px;background:#a6a6a6;"></div>
<div class="a" style="left:117.5px;top:88px;width:1px;height:15px;background:#a6a6a6;"></div>
<span class="t" style="left:12px;top:88.6px;font-size:8.5px;line-height:12px;color:#141414;transform:scaleX(0.898);">Element Size</span>
<span class="t" style="left:120px;top:88.6px;font-size:8.5px;line-height:12px;color:#141414;transform:scaleX(0.914);">5,e-003 m</span>
<div class="a" style="left:9px;top:116px;width:219px;height:1px;background:#a6a6a6;"></div>
<div class="a" style="left:117.5px;top:102px;width:1px;height:15px;background:#a6a6a6;"></div>
<span class="t" style="left:12px;top:103.2px;font-size:8.5px;line-height:12px;color:#141414;transform:scaleX(0.927);">Initial Size Seed</span>
<span class="t" style="left:120px;top:103.2px;font-size:8.5px;line-height:12px;color:#141414;transform:scaleX(0.921);">Active Assembly</span>
<div class="a" style="left:9px;top:131px;width:219px;height:1px;background:#a6a6a6;"></div>
<div class="a" style="left:117.5px;top:117px;width:1px;height:15px;background:#a6a6a6;"></div>
<span class="t" style="left:12px;top:117.7px;font-size:8.5px;line-height:12px;color:#141414;transform:scaleX(0.984);">Smoothing</span>
<span class="t" style="left:120px;top:117.7px;font-size:8.5px;line-height:12px;color:#141414;transform:scaleX(0.992);">Medium</span>
<div class="a" style="left:9px;top:145px;width:219px;height:1px;background:#a6a6a6;"></div>
<div class="a" style="left:117.5px;top:131px;width:1px;height:15px;background:#a6a6a6;"></div>
<span class="t" style="left:12px;top:132.2px;font-size:8.5px;line-height:12px;color:#141414;transform:scaleX(0.973);">Transition</span>
<span class="t" style="left:120px;top:132.2px;font-size:8.5px;line-height:12px;color:#141414;transform:scaleX(0.907);">Fast</span>
<div class="a" style="left:9px;top:160px;width:219px;height:1px;background:#a6a6a6;"></div>
<div class="a" style="left:117.5px;top:146px;width:1px;height:15px;background:#a6a6a6;"></div>
<span class="t" style="left:12px;top:146.8px;font-size:8.5px;line-height:12px;color:#141414;transform:scaleX(0.960);">Span Angle Center</span>
<span class="t" style="left:120px;top:146.8px;font-size:8.5px;line-height:12px;color:#141414;transform:scaleX(0.912);">Coarse</span>
<div class="a" style="left:118px;top:161px;width:109px;height:14px;background:#e9e7e3;"></div>
<div class="a" style="left:9px;top:174px;width:219px;height:1px;background:#a6a6a6;"></div>
<div class="a" style="left:117.5px;top:160px;width:1px;height:15px;background:#a6a6a6;"></div>
<span class="t" style="left:12px;top:161.3px;font-size:8.5px;line-height:12px;color:#141414;transform:scaleX(0.970);">Minimum Edge Length</span>
<span class="t" style="left:120px;top:161.3px;font-size:8.5px;line-height:12px;color:#141414;transform:scaleX(0.914);">1,e-001 m</span>
<div class="a" style="left:9px;top:189px;width:219px;height:1px;background:#a6a6a6;"></div>
<span class="t" style="left:12px;top:175.9px;font-size:8.5px;line-height:12px;color:#111;font-weight:bold;transform:scaleX(0.953);">Inflation</span>
<div class="a" style="left:1.5px;top:178.5px;width:6px;height:6px;border:1px solid #8a8a8a;background:#fff;box-sizing:border-box"></div>
<div class="a" style="left:3px;top:181.0px;width:3px;height:1px;background:#222"></div>
<div class="a" style="left:4px;top:180.0px;width:1px;height:3px;background:#222"></div>
<div class="a" style="left:9px;top:203px;width:219px;height:1px;background:#a6a6a6;"></div>
<span class="t" style="left:12px;top:190.5px;font-size:8.5px;line-height:12px;color:#111;font-weight:bold;transform:scaleX(0.898);">Advanced</span>
<div class="a" style="left:1.5px;top:193.5px;width:6px;height:6px;border:1px solid #8a8a8a;background:#fff;box-sizing:border-box"></div>
<div class="a" style="left:3px;top:196.0px;width:3px;height:1px;background:#222"></div>
<div class="a" style="left:4px;top:195.0px;width:1px;height:3px;background:#222"></div>
<div class="a" style="left:9px;top:218px;width:219px;height:1px;background:#a6a6a6;"></div>
<span class="t" style="left:12px;top:205.0px;font-size:8.5px;line-height:12px;color:#111;font-weight:bold;transform:scaleX(0.885);">Pinch</span>
<div class="a" style="left:1.5px;top:207.5px;width:6px;height:6px;border:1px solid #8a8a8a;background:#fff;box-sizing:border-box"></div>
<div class="a" style="left:3px;top:210.0px;width:3px;height:1px;background:#222"></div>
<div class="a" style="left:4px;top:209.0px;width:1px;height:3px;background:#222"></div>
<div class="a" style="left:9px;top:232px;width:219px;height:1px;background:#a6a6a6;"></div>
<span class="t" style="left:12px;top:219.5px;font-size:8.5px;line-height:12px;color:#111;font-weight:bold;transform:scaleX(0.900);">Statistics</span>
<div class="a" style="left:1.5px;top:222.5px;width:6px;height:6px;border:1px solid #8a8a8a;background:#fff;box-sizing:border-box"></div>
<div class="a" style="left:3px;top:225.0px;width:3px;height:1px;background:#222"></div>
<div class="a" style="left:4px;top:224.0px;width:1px;height:3px;background:#222"></div>
<div class="a" style="left:229px;top:0px;width:11px;height:14px;background:#f0f0f0;"></div>
<svg style="left:232px;top:5px" width="5" height="3" viewBox="0 0 5 3"><path d="M0 3H5L2.5 0Z" fill="#444"/></svg>
<svg style="left:232px;top:215px" width="5" height="3" viewBox="0 0 5 3"><path d="M0 0H5L2.5 3Z" fill="#444"/></svg>
<div class="a" style="left:229px;top:15px;width:11px;height:183px;border:1px solid #b4b4b4;border-radius:2px;background:linear-gradient(90deg,#f4f4f4 0%,#e0e0e0 45%,#c8c8c8 60%,#c4c4c4 100%);box-sizing:border-box"></div>
<div class="a" style="left:232px;top:104.5px;width:5px;height:1px;background:#8a8a8a;"></div>
<div class="a" style="left:232px;top:106.5px;width:5px;height:1px;background:#8a8a8a;"></div>
<div class="a" style="left:232px;top:108.5px;width:5px;height:1px;background:#8a8a8a;"></div>
</div>
<div class="a" style="left:0px;top:635px;width:240px;height:5px;background:#f8f8f8;"></div>
<div class="a" style="left:0px;top:640px;width:240px;height:16px;background:linear-gradient(90deg,#bfcfe2 0%,#ccd9e9 50%,#dbe5f0 100%);"></div>
<div class="a" style="left:0px;top:656px;width:240px;height:1.5px;background:#646c78;"></div>
<span class="t" style="left:1px;top:642.5px;font-size:9px;line-height:13px;color:#4e5c6e;transform:scaleX(0.899);">Section Planes</span>
<svg style="left:220.800px;top:644.500px" width="6.400" height="8" viewBox="0 0 8 10"><path d="M2 1H6M2.5 1V5M5.5 1V5M1 5.5H7M4 5.5V9" stroke="#222" stroke-width="1" fill="none"/></svg>
<svg style="left:232px;top:645px" width="7" height="7" viewBox="0 0 7 7"><path d="M0.5 0.5L6.5 6.5M6.5 0.5L0.5 6.5" stroke="#111" stroke-width="1.4"/></svg>
<div class="a" style="left:0px;top:678px;width:240px;height:21.5px;background:#fff;border:1px solid #8e8e8e;border-bottom:1.500px solid #505050;border-left:none;box-sizing:border-box;"></div>
<div class="a" style="left:2px;top:660px;width:1px;height:16px;background:#c0c0c0;"></div>
<svg style="left:8.5px;top:662px" width="12" height="12" viewBox="0 0 12 12"><rect x="1.500" y="2.500" width="4.500" height="8.500" fill="#fff" stroke="#666" stroke-width="0.800"/><rect x="5" y="1.500" width="6" height="9.500" fill="#2a3cc0" stroke="#141c70" stroke-width="0.800"/><rect x="6.500" y="3" width="3" height="6" fill="#5a70e8"/><path d="M2.500 0V5M0 2.500H5" stroke="#d81818" stroke-width="1.100"/></svg>
<svg style="left:27px;top:663.5px" width="9" height="9" viewBox="0 0 9 9"><path d="M0.500 0.500L8.500 8.500M8.500 0.500L0.500 8.500" stroke="#a8a8a8" stroke-width="1.300"/></svg>
<svg style="left:43.5px;top:662.5px" width="11" height="11" viewBox="0 0 11 11"><path d="M5.500 0.500L10.500 5L5.500 10.500L2 5Z" fill="#3a90e8"/><path d="M5.500 0.500L5.500 10.500L2 5Z" fill="#9ad0f8"/><path d="M5.500 0.500L10.500 5L5.500 5.500Z" fill="#1a5ac0"/></svg>
<div class="a" style="left:244px;top:85px;width:780px;height:391px;background:linear-gradient(180deg,#6989da 0%,#7a96de 12%,#8aa3e2 25%,#9bb0e7 37%,#acbdeb 50%,#c0cdf0 62%,#d6def6 75%,#ebeffb 88%,#ffffff 100%);"></div>
<div class="a" style="left:244px;top:85px;width:780px;height:1px;background:#4f5a70;"></div>
<div class="a" style="left:244.2px;top:85px;width:1.6px;height:391px;background:linear-gradient(180deg,#7a849c 0%,#868e9e 60%,#5a5e68 100%);"></div>
<svg style="left:0;top:0" width="1024" height="767" viewBox="0 0 1024 767">
<g transform="matrix(1,-0.4042,0.27,1,263.3,432.5)">
<rect x="0" y="0" width="736" height="20.4" fill="#3c3c3c"/>
<rect x="0" y="0" width="736" height="4.2" fill="#bebebe"/>
<rect x="0" y="4.2" width="736" height="12.600000000000001" fill="#bababa"/>
<path d="M0 18.6H736" stroke="#7a7a7a" stroke-width="1" stroke-dasharray="2.500 1.260" fill="none"/>
<path d="M3.76 4.2V16.8M7.52 4.2V16.8M11.28 4.2V16.8M15.04 4.2V16.8M18.80 4.2V16.8M22.56 4.2V16.8M26.32 4.2V16.8M30.08 4.2V16.8M33.84 4.2V16.8M37.60 4.2V16.8M41.36 4.2V16.8M45.12 4.2V16.8M48.88 4.2V16.8M52.64 4.2V16.8M56.40 4.2V16.8M60.16 4.2V16.8M63.92 4.2V16.8M67.68 4.2V16.8M71.44 4.2V16.8M75.20 4.2V16.8M78.96 4.2V16.8M82.72 4.2V16.8M86.48 4.2V16.8M90.24 4.2V16.8M94.00 4.2V16.8M97.76 4.2V16.8M101.52 4.2V16.8M105.28 4.2V16.8M109.04 4.2V16.8M112.80 4.2V16.8M116.56 4.2V16.8M120.32 4.2V16.8M124.08 4.2V16.8M127.84 4.2V16.8M131.60 4.2V16.8M135.36 4.2V16.8M139.12 4.2V16.8M142.88 4.2V16.8M146.64 4.2V16.8M150.40 4.2V16.8M154.16 4.2V16.8M157.92 4.2V16.8M161.68 4.2V16.8M165.44 4.2V16.8M169.20 4.2V16.8M172.96 4.2V16.8M176.72 4.2V16.8M180.48 4.2V16.8M184.24 4.2V16.8M188.00 4.2V16.8M191.76 4.2V16.8M195.52 4.2V16.8M199.28 4.2V16.8M203.04 4.2V16.8M206.80 4.2V16.8M210.56 4.2V16.8M214.32 4.2V16.8M218.08 4.2V16.8M221.84 4.2V16.8M225.60 4.2V16.8M229.36 4.2V16.8M233.12 4.2V16.8M236.88 4.2V16.8M240.64 4.2V16.8M244.40 4.2V16.8M248.16 4.2V16.8M251.92 4.2V16.8M255.68 4.2V16.8M259.44 4.2V16.8M263.20 4.2V16.8M266.96 4.2V16.8M270.72 4.2V16.8M274.48 4.2V16.8M278.24 4.2V16.8M282.00 4.2V16.8M285.76 4.2V16.8M289.52 4.2V16.8M293.28 4.2V16.8M297.04 4.2V16.8M300.80 4.2V16.8M304.56 4.2V16.8M308.32 4.2V16.8M312.08 4.2V16.8M315.84 4.2V16.8M319.60 4.2V16.8M323.36 4.2V16.8M327.12 4.2V16.8M330.88 4.2V16.8M334.64 4.2V16.8M338.40 4.2V16.8M342.16 4.2V16.8M345.92 4.2V16.8M349.68 4.2V16.8M353.44 4.2V16.8M357.20 4.2V16.8M360.96 4.2V16.8M364.72 4.2V16.8M368.48 4.2V16.8M372.24 4.2V16.8M376.00 4.2V16.8M379.76 4.2V16.8M383.52 4.2V16.8M387.28 4.2V16.8M391.04 4.2V16.8M394.80 4.2V16.8M398.56 4.2V16.8M402.32 4.2V16.8M406.08 4.2V16.8M409.84 4.2V16.8M413.60 4.2V16.8M417.36 4.2V16.8M421.12 4.2V16.8M424.88 4.2V16.8M428.64 4.2V16.8M432.40 4.2V16.8M436.16 4.2V16.8M439.92 4.2V16.8M443.68 4.2V16.8M447.44 4.2V16.8M451.20 4.2V16.8M454.96 4.2V16.8M458.72 4.2V16.8M462.48 4.2V16.8M466.24 4.2V16.8M470.00 4.2V16.8M473.76 4.2V16.8M477.52 4.2V16.8M481.28 4.2V16.8M485.04 4.2V16.8M488.80 4.2V16.8M492.56 4.2V16.8M496.32 4.2V16.8M500.08 4.2V16.8M503.84 4.2V16.8M507.60 4.2V16.8M511.36 4.2V16.8M515.12 4.2V16.8M518.88 4.2V16.8M522.64 4.2V16.8M526.40 4.2V16.8M530.16 4.2V16.8M533.92 4.2V16.8M537.68 4.2V16.8M541.44 4.2V16.8M545.20 4.2V16.8M548.96 4.2V16.8M552.72 4.2V16.8M556.48 4.2V16.8M560.24 4.2V16.8M564.00 4.2V16.8M567.76 4.2V16.8M571.52 4.2V16.8M575.28 4.2V16.8M579.04 4.2V16.8M582.80 4.2V16.8M586.56 4.2V16.8M590.32 4.2V16.8M594.08 4.2V16.8M597.84 4.2V16.8M601.60 4.2V16.8M605.36 4.2V16.8M609.12 4.2V16.8M612.88 4.2V16.8M616.64 4.2V16.8M620.40 4.2V16.8M624.16 4.2V16.8M627.92 4.2V16.8M631.68 4.2V16.8M635.44 4.2V16.8M639.20 4.2V16.8M642.96 4.2V16.8M646.72 4.2V16.8M650.48 4.2V16.8M654.24 4.2V16.8M658.00 4.2V16.8M661.76 4.2V16.8M665.52 4.2V16.8M669.28 4.2V16.8M673.04 4.2V16.8M676.80 4.2V16.8M680.56 4.2V16.8M684.32 4.2V16.8M688.08 4.2V16.8M691.84 4.2V16.8M695.60 4.2V16.8M699.36 4.2V16.8M703.12 4.2V16.8M706.88 4.2V16.8M710.64 4.2V16.8M714.40 4.2V16.8M718.16 4.2V16.8M721.92 4.2V16.8M725.68 4.2V16.8M729.44 4.2V16.8M733.20 4.2V16.8" stroke="#303030" stroke-width="1.150" fill="none"/>
<path d="M7.52 0.3L8.72 4.2M15.04 0.3L16.24 4.2M22.56 0.3L23.76 4.2M30.08 0.3L31.28 4.2M37.60 0.3L38.80 4.2M45.12 0.3L46.32 4.2M52.64 0.3L53.84 4.2M60.16 0.3L61.36 4.2M67.68 0.3L68.88 4.2M75.20 0.3L76.40 4.2M82.72 0.3L83.92 4.2M90.24 0.3L91.44 4.2M97.76 0.3L98.96 4.2M105.28 0.3L106.48 4.2M112.80 0.3L114.00 4.2M120.32 0.3L121.52 4.2M127.84 0.3L129.04 4.2M135.36 0.3L136.56 4.2M142.88 0.3L144.08 4.2M150.40 0.3L151.60 4.2M157.92 0.3L159.12 4.2M165.44 0.3L166.64 4.2M172.96 0.3L174.16 4.2M180.48 0.3L181.68 4.2M188.00 0.3L189.20 4.2M195.52 0.3L196.72 4.2M203.04 0.3L204.24 4.2M210.56 0.3L211.76 4.2M218.08 0.3L219.28 4.2M225.60 0.3L226.80 4.2M233.12 0.3L234.32 4.2M240.64 0.3L241.84 4.2M248.16 0.3L249.36 4.2M255.68 0.3L256.88 4.2M263.20 0.3L264.40 4.2M270.72 0.3L271.92 4.2M278.24 0.3L279.44 4.2M285.76 0.3L286.96 4.2M293.28 0.3L294.48 4.2M300.80 0.3L302.00 4.2M308.32 0.3L309.52 4.2M315.84 0.3L317.04 4.2M323.36 0.3L324.56 4.2M330.88 0.3L332.08 4.2M338.40 0.3L339.60 4.2M345.92 0.3L347.12 4.2M353.44 0.3L354.64 4.2M360.96 0.3L362.16 4.2M368.48 0.3L369.68 4.2M376.00 0.3L377.20 4.2M383.52 0.3L384.72 4.2M391.04 0.3L392.24 4.2M398.56 0.3L399.76 4.2M406.08 0.3L407.28 4.2M413.60 0.3L414.80 4.2M421.12 0.3L422.32 4.2M428.64 0.3L429.84 4.2M436.16 0.3L437.36 4.2M443.68 0.3L444.88 4.2M451.20 0.3L452.40 4.2M458.72 0.3L459.92 4.2M466.24 0.3L467.44 4.2M473.76 0.3L474.96 4.2M481.28 0.3L482.48 4.2M488.80 0.3L490.00 4.2M496.32 0.3L497.52 4.2M503.84 0.3L505.04 4.2M511.36 0.3L512.56 4.2M518.88 0.3L520.08 4.2M526.40 0.3L527.60 4.2M533.92 0.3L535.12 4.2M541.44 0.3L542.64 4.2M548.96 0.3L550.16 4.2M556.48 0.3L557.68 4.2M564.00 0.3L565.20 4.2M571.52 0.3L572.72 4.2M579.04 0.3L580.24 4.2M586.56 0.3L587.76 4.2M594.08 0.3L595.28 4.2M601.60 0.3L602.80 4.2M609.12 0.3L610.32 4.2M616.64 0.3L617.84 4.2M624.16 0.3L625.36 4.2M631.68 0.3L632.88 4.2M639.20 0.3L640.40 4.2M646.72 0.3L647.92 4.2M654.24 0.3L655.44 4.2M661.76 0.3L662.96 4.2M669.28 0.3L670.48 4.2M676.80 0.3L678.00 4.2M684.32 0.3L685.52 4.2M691.84 0.3L693.04 4.2M699.36 0.3L700.56 4.2M706.88 0.3L708.08 4.2M714.40 0.3L715.60 4.2M721.92 0.3L723.12 4.2M729.44 0.3L730.64 4.2" stroke="#3a3a3a" stroke-width="0.9" fill="none"/>
<path d="M0 2.3000000000000003H736" stroke="#555" stroke-width="0.6" stroke-dasharray="5 3" fill="none"/>
<path d="M0 0H736M0 4.2H736M0 16.8H736" stroke="#2c2c2c" stroke-width="1" fill="none"/>
<rect x="0" y="0" width="736" height="20.4" fill="none" stroke="#2a2a2a" stroke-width="1"/>
</g>
</svg>
<span><span class="t" style="left:944.7px;top:79.5px;font-size:28px;line-height:39px;color:#e3e8f6;font-weight:bold;transform:scaleX(0.927);text-shadow:1px 1px 0 #4a5468,-0.5px -0.5px 0 #8090b0;">AN</span><span class="t" style="left:981.7px;top:79.5px;font-size:28px;line-height:39px;color:#c9a94c;font-weight:bold;transform:scaleX(0.692);text-shadow:1px 1px 0 #5a4a20,-0.5px -0.5px 0 #8a7a50;">SYS</span></span>
<span class="t" style="left:987.7px;top:112.5px;font-size:12.5px;line-height:18px;color:#e9edf8;font-weight:bold;transform:scaleX(1.042);text-shadow:1px 1px 0 #4a5468,-0.5px -0.5px 0 #7080a0;">v12.1</span>
<div class="a" style="left:511px;top:444px;width:248px;height:7px;background:#fff;border:1px solid #222;box-sizing:border-box;"></div>
<div class="a" style="left:511.5px;top:444px;width:61.5px;height:7px;background:#000;"></div>
<div class="a" style="left:634.5px;top:444px;width:62.5px;height:7px;background:#000;"></div>
<span class="t" style="left:501px;top:430.6px;font-size:10px;line-height:14px;color:#1c1c1c;transform:scaleX(0.759);-webkit-text-stroke:0;">0,000</span>
<span class="t" style="left:625px;top:430.6px;font-size:10px;line-height:14px;color:#1c1c1c;transform:scaleX(0.759);-webkit-text-stroke:0;">0,150</span>
<span class="t" style="left:749px;top:430.6px;font-size:10px;line-height:14px;color:#1c1c1c;transform:scaleX(0.794);-webkit-text-stroke:0;">0,300 (m)</span>
<span class="t" style="left:562.5px;top:451.4px;font-size:10px;line-height:14px;color:#1c1c1c;transform:scaleX(0.759);-webkit-text-stroke:0;">0,075</span>
<span class="t" style="left:686.5px;top:451.4px;font-size:10px;line-height:14px;color:#1c1c1c;transform:scaleX(0.759);-webkit-text-stroke:0;">0,225</span>
<svg style="left:900px;top:355px" width="110" height="100" viewBox="900 355 110 100">
<path d="M965 418L929.500 432" stroke="#1c22c8" stroke-width="2.900"/>
<path d="M924.5 434.3L934 426.500L936.8 434.2Z" fill="#1c22c8"/>
<path d="M965 418L979 433" stroke="#c8262a" stroke-width="2.900"/>
<path d="M983.200 438.500L975.500 436L977 430.500L982 429.500Z" fill="#c8262a"/>
<path d="M964.8 418L961.6 386" stroke="#1c8a1c" stroke-width="2.900"/>
<path d="M960.7 376.800L965.800 388L957 388.800Z" fill="#1c8a1c"/>
<circle cx="954.100" cy="415.700" r="4.100" fill="#18c8dc"/>
<circle cx="953.200" cy="414.500" r="1.600" fill="#8aeef6"/>
</svg>
<span class="t" style="left:959px;top:362.0px;font-size:9px;line-height:13px;color:#3aa04a;-webkit-text-stroke:0;">Y</span>
<span class="t" style="left:920.5px;top:427.0px;font-size:9px;line-height:13px;color:#3a3ac8;transform:scaleX(1.091);-webkit-text-stroke:0;">Z</span>
<span class="t" style="left:986.5px;top:433.3px;font-size:9px;line-height:13px;color:#e04a4a;-webkit-text-stroke:0;">X</span>
<div class="a" style="left:242px;top:476px;width:782px;height:21px;background:#f0f0f0;"></div>
<div class="a" style="left:244px;top:476px;width:2px;height:15px;background:#5a6070;"></div>
<svg style="left:0;top:0" width="1024" height="767" viewBox="0 0 1024 767"><path d="M245.4 477L251 490.500H294.750L299.750 478.250L299.750 476H245.400Z" fill="#fff"/><path d="M299.750 478.250H1024" stroke="#707070" stroke-width="1.100" fill="none"/><path d="M244 490.700H1024" stroke="#3c3c3c" stroke-width="1.400" fill="none"/><path d="M245.400 477.500L251 490.500M299.750 478.250L294.750 490.500M301 478.250L297.250 485L299.750 490.500M353.500 478.250L356.600 485L352.900 490.500M358 478.250L355.500 482.500M356.600 485L359 490.500M422.600 478.250L417.700 490.500" stroke="#2a2a2a" stroke-width="1" fill="none"/></svg>
<span class="t" style="left:253.7px;top:478.8px;font-size:8.5px;line-height:12px;color:#000;font-weight:bold;transform:scaleX(0.983);">Geometry</span>
<span class="t" style="left:302.5px;top:478.8px;font-size:8.5px;line-height:12px;color:#141414;transform:scaleX(0.968);">Print Preview</span>
<span class="t" style="left:359px;top:478.8px;font-size:8.5px;line-height:12px;color:#141414;transform:scaleX(0.981);">Report Preview</span>
<div class="a" style="left:244px;top:497px;width:780px;height:16px;background:linear-gradient(90deg,#bfcfe2 0%,#ccd9e9 50%,#dbe5f0 100%);"></div>
<div class="a" style="left:244px;top:513px;width:780px;height:1.3px;background:#646c78;"></div>
<span class="t" style="left:248px;top:499.0px;font-size:9px;line-height:13px;color:#4e5c6e;transform:scaleX(0.853);">Messages</span>
<svg style="left:1005.500px;top:501.300px" width="6.400" height="8" viewBox="0 0 8 10"><path d="M2 1H6M2.5 1V5M5.5 1V5M1 5.500H7M4 5.5V9" stroke="#222" stroke-width="1" fill="none"/></svg>
<svg style="left:1015.500px;top:501.500px" width="7" height="7" viewBox="0 0 7 7"><path d="M0.5 0.5L6.5 6.5M6.5 0.5L0.5 6.5" stroke="#111" stroke-width="1.4"/></svg>
<div class="a" style="left:244px;top:514px;width:780px;height:185px;background:#a0a0a0;"></div>
<div class="a" style="left:244px;top:514px;width:2px;height:185px;background:#707070;"></div>
<div class="a" style="left:246px;top:514px;width:692px;height:13px;background:#f0f0f0;border-bottom:1px solid #8a8a8a;box-sizing:border-box;"></div>
<div class="a" style="left:280.5px;top:514px;width:1px;height:13px;background:#8a8a8a;"></div>
<div class="a" style="left:613px;top:514px;width:1px;height:13px;background:#8a8a8a;"></div>
<div class="a" style="left:831px;top:514px;width:1px;height:13px;background:#8a8a8a;"></div>
<div class="a" style="left:938px;top:514px;width:1px;height:13px;background:#8a8a8a;"></div>
<span class="t" style="left:284.5px;top:515.0px;font-size:8.5px;line-height:12px;color:#141414;transform:scaleX(0.994);">Text</span>
<span class="t" style="left:616px;top:515.0px;font-size:8.5px;line-height:12px;color:#141414;transform:scaleX(0.989);">Association</span>
<span class="t" style="left:834px;top:515.0px;font-size:8.5px;line-height:12px;color:#141414;transform:scaleX(0.934);">Timestamp</span>
<div class="a" style="left:0px;top:699px;width:1024px;height:21px;background:#f0f0f0;"></div>
<div class="a" style="left:0px;top:699.5px;width:1024px;height:4.5px;background:#fafafa;"></div>
<div class="a" style="left:0px;top:704px;width:1024px;height:1px;background:#dedede;"></div>
<span class="t" style="left:0px;top:706.5px;font-size:8.5px;line-height:12px;color:#141414;transform:scaleX(0.937);">Press F1 for Help</span>
<div class="a" style="left:275.5px;top:706px;width:1px;height:13px;background:#c4c4c4;"></div>
<div class="a" style="left:410.5px;top:706px;width:1px;height:13px;background:#c4c4c4;"></div>
<div class="a" style="left:522px;top:706px;width:1px;height:13px;background:#c4c4c4;"></div>
<div class="a" style="left:770px;top:706px;width:1px;height:13px;background:#c4c4c4;"></div>
<span class="t" style="left:426.5px;top:706.5px;font-size:8.5px;line-height:12px;color:#141414;transform:scaleX(0.952);">No Messages</span>
<span class="t" style="left:525px;top:706.5px;font-size:8.5px;line-height:12px;color:#141414;transform:scaleX(0.985);">No Selection</span>
<span class="t" style="left:772.8px;top:706.5px;font-size:8.5px;line-height:12px;color:#141414;transform:scaleX(0.991);">Metric (m, kg, N, s, V, A)</span>
<span class="t" style="left:872px;top:706.5px;font-size:8.5px;line-height:12px;color:#141414;transform:scaleX(0.933);">Degrees</span>
<span class="t" style="left:910px;top:706.5px;font-size:8.5px;line-height:12px;color:#141414;">rad/s</span>
<span class="t" style="left:938.5px;top:706.5px;font-size:8.5px;line-height:12px;color:#141414;transform:scaleX(0.933);">Celsius</span>
<svg style="left:412px;top:706px" width="12" height="13" viewBox="0 0 12 13"><path d="M2.500 2.500C4 0.800 9.500 0.800 11 2.800C12 5 11 8 8 8.500H5L2.500 12L3 8.300C0.800 7.500 0.800 4 2.500 2.500Z" fill="#f2e25a" stroke="#c8b428" stroke-width="0.700"/></svg>
<span class="t" style="left:417.3px;top:702.7px;font-size:10.5px;line-height:15px;color:#1c1c1c;font-weight:bold;transform:scaleX(0.821);">0</span>
<svg style="left:1012px;top:708px" width="11" height="11" viewBox="0 0 11 11"><path d="M10 2L2 10M10 5.500L5.500 10M10 8.500L8.500 10" stroke="#b8b8b8" stroke-width="1"/></svg>
<div class="a" style="left:0px;top:720px;width:1024px;height:47px;background:#fff;"></div>
<span class="t" style="left:8.8px;top:736.0px;font-size:22.3px;line-height:31px;color:#e8000a;font-weight:bold;-webkit-text-stroke:0;">Шаг 4</span>
<span class="t" style="left:316.5px;top:735.4px;font-size:24px;line-height:34px;color:#000;transform:scaleX(0.946);-webkit-text-stroke:0;">Построение сети конечных элементов</span>
</body>
</html>
